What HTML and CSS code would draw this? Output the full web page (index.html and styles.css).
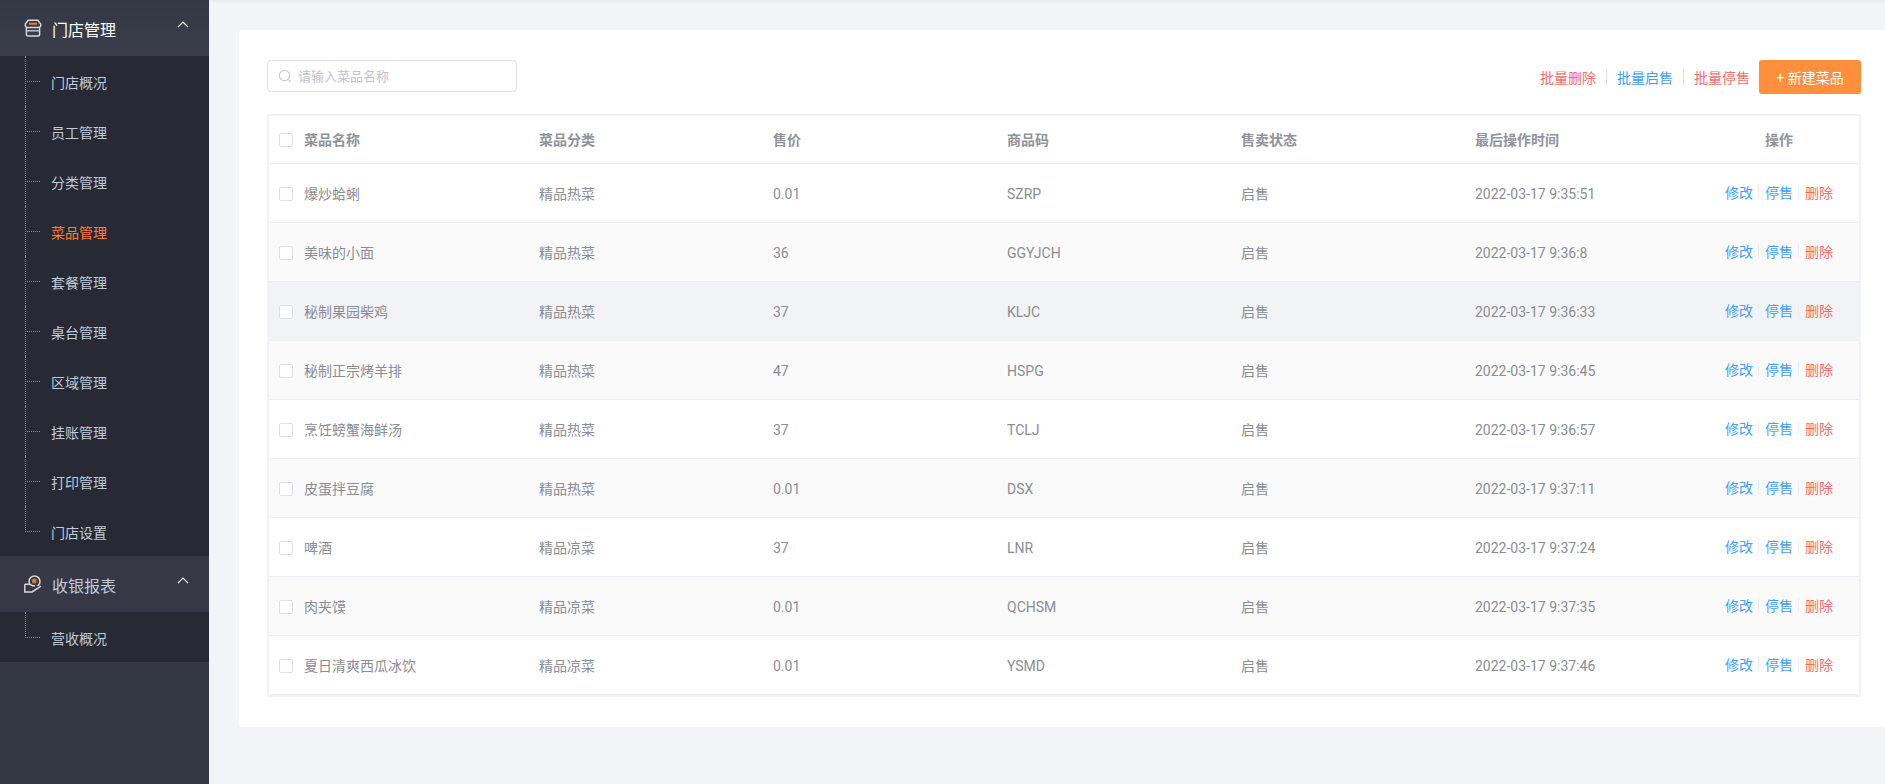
FILE: index.html
```html
<!DOCTYPE html>
<html lang="zh-CN">
<head>
    <meta charset="UTF-8">
    <title>菜品管理</title>
    <link rel="stylesheet" href="styles.css">
</head>
<body>

<aside class="sidebar">
    <div class="menu-title">
        <svg class="menu-icon" width="18" height="18" viewBox="0 0 18 18" fill="none">
            <path d="M4.200 1.200h9.600l2.900 3.900c.5 2.300-1.100 3.400-2.400 3.400H3.700C2.400 8.500 .8 7.400 1.300 5.100z" stroke="#d5d7dc" stroke-width="1.500"/>
            <path d="M5 4.700h8" stroke="#ff7a2a" stroke-width="2"/>
            <path d="M2.400 8.500v6.900c0 1 .6 1.600 1.500 1.600h10.200c.9 0 1.500-.6 1.500-1.600V8.500" stroke="#d5d7dc" stroke-width="1.500"/>
            <path d="M2.400 11.800h13.200" stroke="#d5d7dc" stroke-width="1.300"/>
        </svg>
        <span>门店管理</span>
        <svg class="chevron" width="12" height="7" viewBox="0 0 12 7" fill="none"><path d="M1 6l5-5 5 5" stroke="#fff" stroke-width="1.200"/></svg>
    </div>
    <ul class="submenu">
        <li>门店概况</li>
        <li>员工管理</li>
        <li>分类管理</li>
        <li class="active">菜品管理</li>
        <li>套餐管理</li>
        <li>桌台管理</li>
        <li>区域管理</li>
        <li>挂账管理</li>
        <li>打印管理</li>
        <li>门店设置</li>
    </ul>
    <div class="menu-title muted">
        <svg class="menu-icon" width="18" height="18" viewBox="0 0 18 18" fill="none">
            <circle cx="10.500" cy="6.500" r="5.500" stroke="#d5d7dc" stroke-width="1.500"/>
            <circle cx="10.300" cy="6" r="2.500" fill="#d9762c"/>
            <path d="M.8 9.200h4.700l3 1.500h2.500M.8 9.200v7.800h7.200l9-5.800" stroke="#d5d7dc" stroke-width="1.500" fill="#363945"/>
        </svg>
        <span>收银报表</span>
        <svg class="chevron" width="12" height="7" viewBox="0 0 12 7" fill="none"><path d="M1 6l5-5 5 5" stroke="#fff" stroke-width="1.200"/></svg>
    </div>
    <ul class="submenu">
        <li>营收概况</li>
    </ul>
</aside>

<main class="main">
    <div class="card">
        <div class="toolbar">
            <div class="search">
                <svg width="14" height="14" viewBox="0 0 14 14" fill="none">
                    <circle cx="6.500" cy="6.500" r="5.200" stroke="#c4c8d2" stroke-width="1.100"/>
                    <path d="M10.300 10.300l2.500 2.500" stroke="#c4c8d2" stroke-width="1.100"/>
                </svg>
                <input type="text" placeholder="请输入菜品名称">
            </div>
            <div class="actions">
                <a class="red">批量删除</a>
                <i class="line"></i>
                <a class="blue">批量启售</a>
                <i class="line"></i>
                <a class="red">批量停售</a>
                <button type="button">+ 新建菜品</button>
            </div>
        </div>

        <div class="table-wrap">
            <table>
                <colgroup>
                    <col class="col-name">
                    <col class="col-mid">
                    <col class="col-mid">
                    <col class="col-mid">
                    <col class="col-mid">
                    <col class="col-time">
                    <col>
                </colgroup>
                <thead>
                    <tr>
                        <th class="name-cell"><span class="check"></span>菜品名称</th>
                        <th>菜品分类</th>
                        <th>售价</th>
                        <th>商品码</th>
                        <th>售卖状态</th>
                        <th>最后操作时间</th>
                        <th class="op-head">操作</th>
                    </tr>
                </thead>
                <tbody>
                    <tr>
                        <td class="name-cell"><span class="check"></span>爆炒蛤蜊</td>
                        <td>精品热菜</td><td>0.01</td><td>SZRP</td><td>启售</td><td>2022-03-17 9:35:51</td>
                        <td><div class="ops"><a class="blue">修改</a><i></i><a class="blue">停售</a><i></i><a class="red">删除</a></div></td>
                    </tr>
                    <tr>
                        <td class="name-cell"><span class="check"></span>美味的小面</td>
                        <td>精品热菜</td><td>36</td><td>GGYJCH</td><td>启售</td><td>2022-03-17 9:36:8</td>
                        <td><div class="ops"><a class="blue">修改</a><i></i><a class="blue">停售</a><i></i><a class="red">删除</a></div></td>
                    </tr>
                    <tr class="hover">
                        <td class="name-cell"><span class="check"></span>秘制果园柴鸡</td>
                        <td>精品热菜</td><td>37</td><td>KLJC</td><td>启售</td><td>2022-03-17 9:36:33</td>
                        <td><div class="ops"><a class="blue">修改</a><i></i><a class="blue">停售</a><i></i><a class="red">删除</a></div></td>
                    </tr>
                    <tr>
                        <td class="name-cell"><span class="check"></span>秘制正宗烤羊排</td>
                        <td>精品热菜</td><td>47</td><td>HSPG</td><td>启售</td><td>2022-03-17 9:36:45</td>
                        <td><div class="ops"><a class="blue">修改</a><i></i><a class="blue">停售</a><i></i><a class="red">删除</a></div></td>
                    </tr>
                    <tr>
                        <td class="name-cell"><span class="check"></span>烹饪螃蟹海鲜汤</td>
                        <td>精品热菜</td><td>37</td><td>TCLJ</td><td>启售</td><td>2022-03-17 9:36:57</td>
                        <td><div class="ops"><a class="blue">修改</a><i></i><a class="blue">停售</a><i></i><a class="red">删除</a></div></td>
                    </tr>
                    <tr>
                        <td class="name-cell"><span class="check"></span>皮蛋拌豆腐</td>
                        <td>精品热菜</td><td>0.01</td><td>DSX</td><td>启售</td><td>2022-03-17 9:37:11</td>
                        <td><div class="ops"><a class="blue">修改</a><i></i><a class="blue">停售</a><i></i><a class="red">删除</a></div></td>
                    </tr>
                    <tr>
                        <td class="name-cell"><span class="check"></span>啤酒</td>
                        <td>精品凉菜</td><td>37</td><td>LNR</td><td>启售</td><td>2022-03-17 9:37:24</td>
                        <td><div class="ops"><a class="blue">修改</a><i></i><a class="blue">停售</a><i></i><a class="red">删除</a></div></td>
                    </tr>
                    <tr>
                        <td class="name-cell"><span class="check"></span>肉夹馍</td>
                        <td>精品凉菜</td><td>0.01</td><td>QCHSM</td><td>启售</td><td>2022-03-17 9:37:35</td>
                        <td><div class="ops"><a class="blue">修改</a><i></i><a class="blue">停售</a><i></i><a class="red">删除</a></div></td>
                    </tr>
                    <tr>
                        <td class="name-cell"><span class="check"></span>夏日清爽西瓜冰饮</td>
                        <td>精品凉菜</td><td>0.01</td><td>YSMD</td><td>启售</td><td>2022-03-17 9:37:46</td>
                        <td><div class="ops"><a class="blue">修改</a><i></i><a class="blue">停售</a><i></i><a class="red">删除</a></div></td>
                    </tr>
                </tbody>
            </table>
        </div>
    </div>
</main>

</body>
</html>
```

FILE: styles.css
```css
* {
    box-sizing: border-box;
}

body {
    font-family: Roboto, "Noto Sans CJK SC", sans-serif;
    font-size: 14px;
    background-color: #f3f4f7;
    display: flex;
    height: 100vh;
    margin: 0;
    overflow: hidden;
}

/* 左侧菜单 */
.sidebar {
    width: 209px;
    flex-shrink: 0;
    background-color: #343744;
}

.menu-title {
    height: 56px;
    display: flex;
    align-items: center;
    padding-left: 24px;
    color: #fff;
    font-size: 16px;
    background: linear-gradient(#343744, #3a3d4a);
}

.menu-title.muted {
    color: #bfcbd9;
    background: #363945;
}

.menu-title span {
    margin-left: 10px;
    padding-top: 2px;
}

.menu-icon {
    flex-shrink: 0;
}

.chevron {
    margin-left: auto;
    margin-right: 20px;
    margin-top: -7px;
}

.submenu {
    list-style: none;
    margin: 0;
    padding: 0;
    background-color: #272935;
    color: #bfcbd9;
}

.submenu li {
    height: 50px;
    line-height: 54px;
    padding-left: 51px;
    position: relative;
}

.submenu li::before {
    content: "";
    position: absolute;
    left: 25px;
    top: 0;
    bottom: 0;
    border-left: 1px dotted #8b8e98;
}

.submenu li:last-child::before {
    bottom: 24px;
}

.submenu li::after {
    content: "";
    position: absolute;
    left: 25px;
    top: 25px;
    width: 15px;
    border-top: 1px dotted #8b8e98;
}

.submenu li.active {
    color: #ff7f30;
}

/* 主体 */
.main {
    flex: 1;
    padding: 30px 0 0 30px;
    box-shadow: inset 0 3px 3px -2px rgba(0, 0, 0, 0.06);
}

.card {
    height: 697px;
    background: white;
    padding: 30px 24px 30px 28px;
    border-radius: 4px 0 0 4px;
}

.toolbar {
    display: flex;
    justify-content: space-between;
    height: 34px;
    margin-bottom: 20px;
}

.search {
    width: 250px;
    height: 32px;
    border: 1px solid #dcdfe6;
    border-radius: 4px;
    display: flex;
    align-items: center;
    padding-left: 10px;
}

.search input {
    border: none;
    outline: none;
    width: 200px;
    margin-left: 6px;
    padding: 0;
    font: inherit;
    font-size: 13px;
}

.search input::placeholder {
    color: #c0c4cc;
}

.actions {
    display: flex;
    align-items: center;
}

.line {
    width: 1px;
    height: 16px;
    margin: 0 10px;
    background-color: #dcdfe6;
}

.red {
    color: #f56c6c;
}

.blue {
    color: #409eff;
}

button {
    width: 102px;
    height: 34px;
    margin-left: 9px;
    border: none;
    border-radius: 3px;
    background-color: #ff8f3c;
    color: white;
    font: inherit;
    cursor: pointer;
}

.table-wrap {
    border: 2px solid #f2f3f8;
}

table {
    width: 100%;
    table-layout: fixed;
    border-collapse: separate;
    border-spacing: 0;
    color: #8a8d94;
}

.col-name {
    width: 270px;
}

.col-mid {
    width: 234px;
}

.col-time {
    width: 228px;
}

th {
    height: 48px;
    padding: 0 0 2px;
    text-align: left;
    font-weight: bold;
    color: #909399;
    border-bottom: 1px solid #ebeef5;
}

td {
    height: 59px;
    padding: 0;
    border-bottom: 1px solid #ebeef5;
}

/* 数字和字母比中文偏高 */
td:nth-child(3),
td:nth-child(4),
td:nth-child(6) {
    padding-top: 2px;
}

tbody tr:nth-child(even) {
    background-color: #fafafa;
}

tbody tr.hover {
    background-color: #f2f3f5;
}

.name-cell,
th.name-cell {
    padding-left: 10px;
}

.check {
    display: inline-block;
    width: 14px;
    height: 14px;
    margin-right: 11px;
    vertical-align: -2px;
    background: white;
    border: 1px solid #dcdfe6;
    border-radius: 2px;
}

.op-head {
    padding-left: 62px;
}

.ops {
    display: flex;
    align-items: center;
    padding-left: 22px;
    margin-top: -2px;
}

.ops i {
    width: 1px;
    height: 14px;
    margin: 0 6px 0 5px;
    background-color: #ebeef5;
}
```
